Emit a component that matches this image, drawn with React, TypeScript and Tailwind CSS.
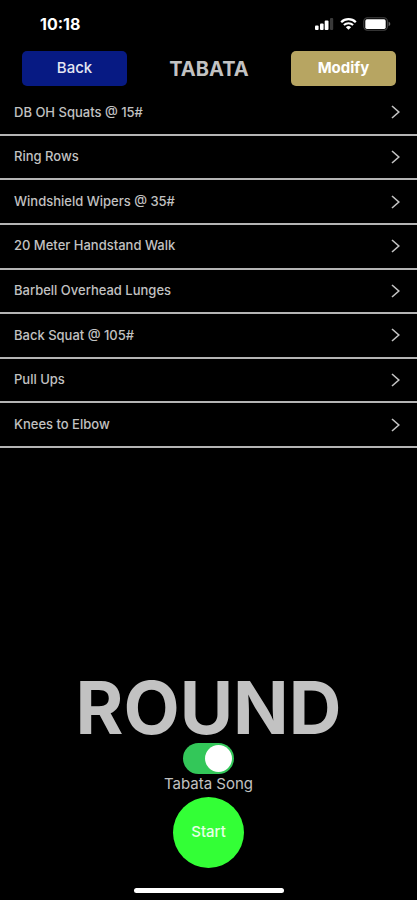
import { useState } from "react";

type Exercise = {
    id: number;
    name: string;
}

const exercises: Exercise[] = [
    {id:0, name:"DB OH Squats @ 15#"},
    {id:1, name:"Ring Rows"},
    {id:2, name:"Windshield Wipers @ 35#"},
    {id:3, name:"20 Meter Handstand Walk"},
    {id:4, name:"Barbell Overhead Lunges"},
    {id:5, name:"Back Squat @ 105#"},
    {id:6, name:"Pull Ups"},
    {id:7, name:"Knees to Elbow"},
]

function StatusBar(){
    return(
        <div className="flex h-[51px] items-center justify-between pl-10 pr-[26px] pb-[3px]">
            <div className="text-base leading-6 font-bold text-white">10:18</div>
            <div className="flex items-center gap-[6px]">
                {/* Signal */}
                <svg width="21" height="14" viewBox="0 0 21 14" fill="#fff" aria-hidden="true">
                    <rect x="2" y="8.5" width="3.6" height="4.5" rx="1" />
                    <rect x="7" y="6.5" width="3.6" height="6.5" rx="1" />
                    <rect x="11.700" y="3.5" width="3.8" height="9.5" rx="1" />
                    <rect x="17" y="1" width="3.2" height="12" rx="1" fill="#3a3a3a" />
                </svg>
                {/* Wifi */}
                <svg width="17" height="14" viewBox="0 0 17 14" fill="none" stroke="#fff" aria-hidden="true">
                    <path d="M1.2 5.2a10.4 10.4 0 0 1 14.6 0" strokeWidth="2.3" />
                    <path d="M3.9 8a6.6 6.6 0 0 1 9.2 0" strokeWidth="2" />
                    <path d="M8.5 12.8 5.9 10.2a3.8 3.8 0 0 1 5.2 0z" fill="#fff" stroke="none" />
                </svg>
                {/* Battery */}
                <svg width="28" height="14" viewBox="0 0 28 14" aria-hidden="true">
                    <rect x="0.8" y="0.8" width="23.6" height="12.4" rx="3.6" fill="none" stroke="#444" strokeWidth="1.1" />
                    <rect x="2.3" y="2.3" width="20.4" height="9.6" rx="1.6" fill="#fff" />
                    <path d="M25.6 4.8v4.4c1.1-.4 1.7-1.2 1.7-2.2s-.6-1.8-1.7-2.2z" fill="#666" />
                </svg>
            </div>
        </div>
    )
}

export default function App(){

    const [songOn, setSongOn] = useState(true)

    return(
        <div className="flex min-h-screen flex-col bg-black font-['Inter','Liberation_Sans',sans-serif] text-[#c2c2c2]">
            <StatusBar />

            {/* HEADER */}
            <header className="flex items-center justify-between pl-[22px] pr-[21px]">
                <button type="button" className="h-[35px] w-[105px] rounded-[5px] bg-[#071a83] text-[15px] font-medium text-[#e4e6f2]">Back</button>
                <h1 className="text-xl leading-7 font-bold">TABATA</h1>
                <button type="button" className="h-[35px] w-[105px] rounded-[5px] bg-[#b7a562] text-[15px] font-bold text-white">Modify</button>
            </header>

            {/* EXERCISES */}
            <ul className="mt-[5px] grid h-[357px] auto-rows-fr">
                {exercises.map(e=>(
                    <li key={e.id} className="border-b-2 border-[#b4b4b4]">
                        <button type="button" className="flex h-full w-full items-center justify-between pl-[14px] pr-[17px] text-left text-[13px] font-medium">
                            <span>{e.name}</span>
                            <svg width="9" height="14" viewBox="0 0 9 14" fill="none" stroke="currentColor" strokeWidth="1.6" aria-hidden="true">
                                <path d="M1 1l6.800 6L1 13" />
                            </svg>
                        </button>
                    </li>
                ))}
            </ul>

            {/* ROUND */}
            <main className="mt-auto flex flex-col items-center pb-[7px]">
                <h2 className="text-[73px] leading-[70px] font-bold">ROUND</h2>
                <label className="flex cursor-pointer flex-col items-center text-[15px] leading-5">
                    <input
                        type="checkbox"
                        role="switch"
                        checked={songOn}
                        onChange={ev=>setSongOn(ev.target.checked)}
                        className="peer sr-only"
                    />
                    <span className="flex h-[31px] w-[51px] items-center rounded-full bg-[#39393d] p-[2px] peer-checked:justify-end peer-checked:bg-[#33c759]">
                        <span className="size-[27px] rounded-full bg-white" />
                    </span>
                    Tabata Song
                </label>
                <button type="button" className="mt-[3px] size-[71px] rounded-full bg-[#33ff36] text-[15px] font-medium text-[#e6ffe6]">Start</button>
                <div className="mt-5 h-[5px] w-[150px] rounded-full bg-white" />
            </main>
        </div>
    )
}
